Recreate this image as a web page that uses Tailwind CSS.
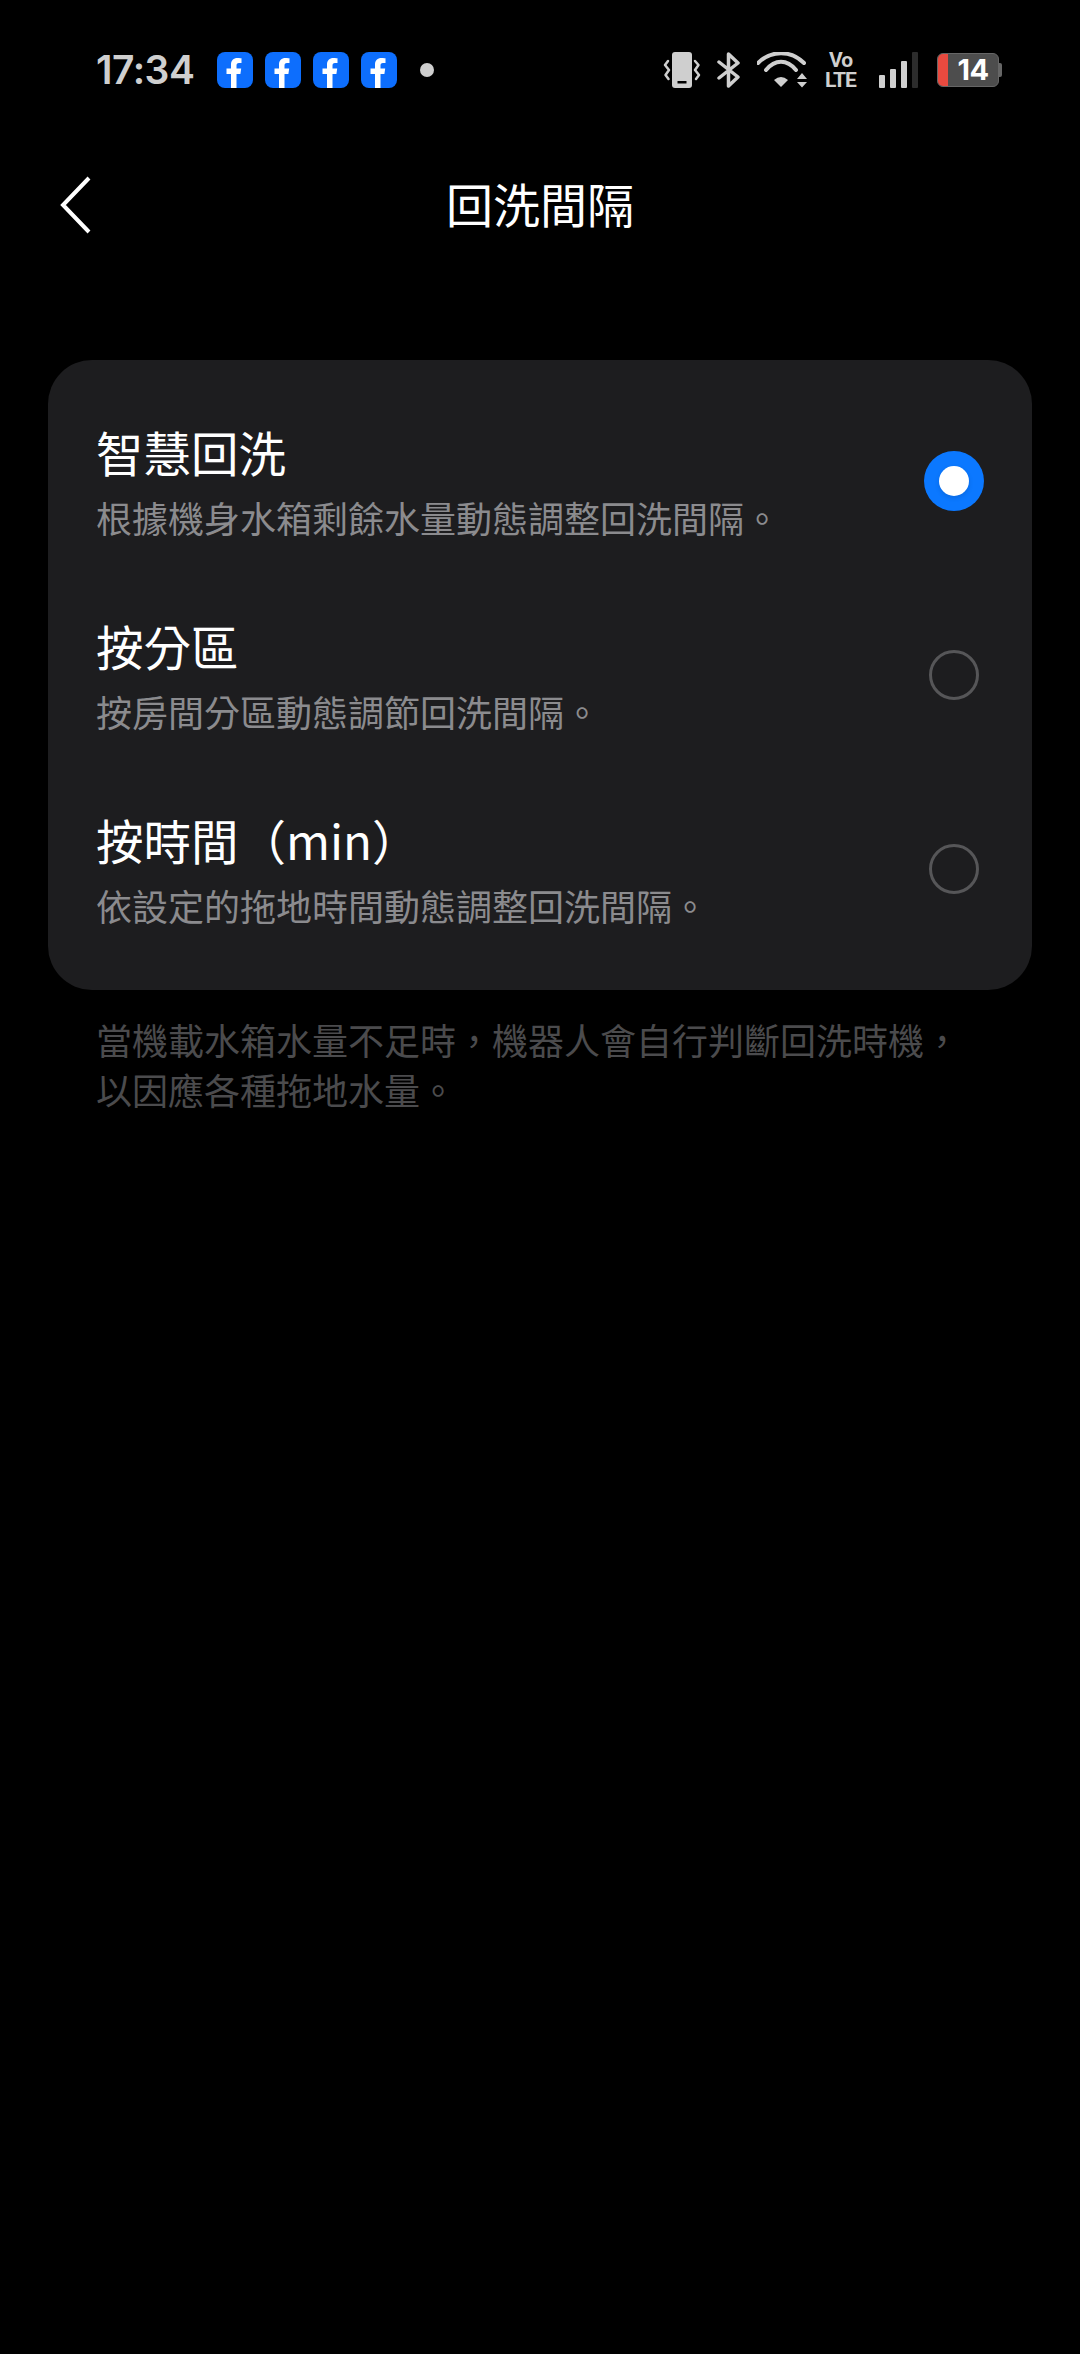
<!DOCTYPE html>
<html lang="zh-Hant">
<head>
<meta charset="UTF-8" />
<meta name="viewport" content="width=device-width, initial-scale=1" />
<title>回洗間隔</title>
<script src="https://cdn.jsdelivr.net/npm/@tailwindcss/browser@4"></script>
</head>
<body class="bg-black w-[1080px] h-[2354px] overflow-hidden font-['Noto_Sans_CJK_TC',sans-serif]">

  <!-- status bar -->
  <div class="h-[70px] mt-[35px] pl-[96px] pr-[78px] flex items-center justify-between">
    <div class="flex items-center">
      <span class="font-['Inter',sans-serif] font-semibold text-[39px] tracking-[-0.5px] text-[#cfcfcf] w-[121px]">17:34</span>
      <div class="flex gap-[12px]">
        <svg class="w-[36px] h-[36px]" viewBox="0 0 36 36"><rect width="36" height="36" rx="8" fill="#0d6efd"/><path d="M14 36V22H9.500V16.500H14V12.500C14 8.500 16.500 6 20.500 6C22.500 6 24.500 6.300 24.500 6.300V11H22C20 11 19.500 12.200 19.500 13.500V16.500H24.200L23.400 22H19.500V36Z" fill="#fff"/></svg>
        <svg class="w-[36px] h-[36px]" viewBox="0 0 36 36"><rect width="36" height="36" rx="8" fill="#0d6efd"/><path d="M14 36V22H9.500V16.500H14V12.500C14 8.500 16.500 6 20.500 6C22.500 6 24.500 6.300 24.500 6.300V11H22C20 11 19.500 12.200 19.500 13.500V16.500H24.200L23.400 22H19.500V36Z" fill="#fff"/></svg>
        <svg class="w-[36px] h-[36px]" viewBox="0 0 36 36"><rect width="36" height="36" rx="8" fill="#0d6efd"/><path d="M14 36V22H9.500V16.500H14V12.500C14 8.500 16.500 6 20.500 6C22.500 6 24.500 6.300 24.500 6.300V11H22C20 11 19.500 12.200 19.500 13.500V16.500H24.200L23.400 22H19.500V36Z" fill="#fff"/></svg>
        <svg class="w-[36px] h-[36px]" viewBox="0 0 36 36"><rect width="36" height="36" rx="8" fill="#0d6efd"/><path d="M14 36V22H9.500V16.500H14V12.500C14 8.500 16.500 6 20.500 6C22.500 6 24.500 6.300 24.500 6.300V11H22C20 11 19.500 12.200 19.500 13.500V16.500H24.200L23.400 22H19.500V36Z" fill="#fff"/></svg>
      </div>
      <div class="w-[14px] h-[14px] rounded-full bg-[#cfcfcf] ml-[23px]"></div>
    </div>
    <div class="flex items-center">
      <!-- vibrate -->
      <svg class="w-[38px] h-[36px]" viewBox="0 0 38 36" fill="none">
        <rect x="9" y="0" width="20" height="36" rx="3" fill="#cfcfcf"/>
        <rect x="14.500" y="29" width="9" height="2.500" fill="#000"/>
        <path d="M5 9L2 13L6 18L2.500 23L5.500 27M32 9L35.500 13L32 18L36 23L33 27" stroke="#cfcfcf" stroke-width="2.500" stroke-linejoin="round" stroke-linecap="round"/>
      </svg>
      <!-- bluetooth -->
      <svg class="w-[24px] h-[36px] ml-[16px]" viewBox="0 0 24 36" fill="none"><path d="M2 10L21 25L11.500 34V2L21 11L2 26" stroke="#cfcfcf" stroke-width="3.500" stroke-linejoin="round" stroke-linecap="round"/></svg>
      <!-- wifi -->
      <svg class="w-[50px] h-[36px] ml-[16px]" viewBox="0 0 50 36" fill="none">
        <path d="M1 11C14 -2 34 -2 47 11M9 18C18 7 30 7 39 18" stroke="#cfcfcf" stroke-width="4" stroke-linecap="round"/>
        <path d="M17 28Q24 22 31 28L24 35Z" fill="#cfcfcf"/>
        <path d="M40 27H50L45 21ZM40 30H50L45 35.500Z" fill="#cfcfcf"/>
      </svg>
      <!-- volte -->
      <div class="ml-[17px] w-[33px] flex flex-col items-center font-['Roboto',sans-serif] font-bold text-[#cfcfcf] text-[21px] tracking-[-1px]">
        <span class="leading-[20px]">Vo</span><span class="leading-[20px]">LTE</span>
      </div>
      <!-- signal -->
      <svg class="w-[39px] h-[36px] ml-[22px]" viewBox="0 0 39 36"><rect x="0" y="23" width="6" height="13" fill="#cfcfcf" rx="1"/><rect x="11" y="17" width="6" height="19" fill="#cfcfcf" rx="1"/><rect x="22" y="9" width="6" height="27" fill="#cfcfcf" rx="1"/><rect x="33" y="0" width="6" height="36" fill="#2c2c2c" rx="1"/></svg>
      <!-- battery -->
      <div class="ml-[19px] flex items-center">
        <div class="w-[62px] h-[34px] rounded-[6px] bg-[#4d4d4d] overflow-hidden flex border border-[#666]">
          <div class="w-[10px] h-full bg-[#e84a3f] shrink-0"></div>
          <span class="flex-1 text-center font-['Inter',sans-serif] font-bold text-white text-[29px] leading-[32px] tracking-[-0.5px]">14</span>
        </div>
        <div class="w-[3px] h-[14px] bg-[#666] rounded-r-[2px]"></div>
      </div>
    </div>
  </div>

  <!-- header -->
  <div class="relative h-[120px] mt-[38px] flex items-center justify-center">
    <svg class="absolute left-[60px] top-[32px] w-[32px] h-[60px]" viewBox="0 0 32 60" fill="none"><path d="M29 3L3 30L29 57" stroke="#fff" stroke-width="4"/></svg>
    <h1 class="text-[47px] leading-[60px] text-white">回洗間隔</h1>
  </div>

  <!-- options card -->
  <div class="mt-[97px] mx-[48px] bg-[#1d1d1f] rounded-[44px] pt-[24px] pb-[24px]">
    <div class="h-[194px] pl-[48px] pr-[48px] flex items-center justify-between">
      <div class="flex flex-col">
        <span class="text-[47.500px] leading-[64px] text-white">智慧回洗</span>
        <span class="mt-[8px] text-[36px] leading-[50px] text-[#8b8b8e]">根據機身水箱剩餘水量動態調整回洗間隔。</span>
      </div>
      <div class="w-[60px] h-[60px] rounded-full bg-[#0b78ff] flex items-center justify-center">
        <div class="w-[30px] h-[30px] rounded-full bg-white shadow-[0_2px_5px_rgba(0,0,0,0.12)]"></div>
      </div>
    </div>
    <div class="h-[194px] pl-[48px] pr-[48px] flex items-center justify-between">
      <div class="flex flex-col">
        <span class="text-[47.500px] leading-[64px] text-white">按分區</span>
        <span class="mt-[8px] text-[36px] leading-[50px] text-[#8b8b8e]">按房間分區動態調節回洗間隔。</span>
      </div>
      <div class="w-[50px] h-[50px] mr-[5px] rounded-full border-[3px] border-[#565658]"></div>
    </div>
    <div class="h-[194px] pl-[48px] pr-[48px] flex items-center justify-between">
      <div class="flex flex-col">
        <span class="text-[47.500px] leading-[64px] text-white">按時間（min）</span>
        <span class="mt-[8px] text-[36px] leading-[50px] text-[#8b8b8e]">依設定的拖地時間動態調整回洗間隔。</span>
      </div>
      <div class="w-[50px] h-[50px] mr-[5px] rounded-full border-[3px] border-[#565658]"></div>
    </div>
  </div>

  <!-- note -->
  <p class="mt-[24px] pl-[96px] pr-[60px] text-[36px] leading-[50px] text-[#4b4b4d]">當機載水箱水量不足時，機器人會自行判斷回洗時機，<br />以因應各種拖地水量。</p>

</body>
</html>
